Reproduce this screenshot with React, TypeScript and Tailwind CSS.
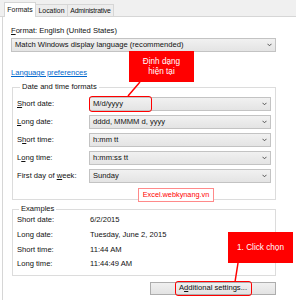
import React from "react";

function Chevron() {
  return (
    <svg width="5" height="4" viewBox="0 0 5 4" className="shrink-0">
      <path d="M0.5 0.8 L2.5 2.8 L4.5 0.8" fill="none" stroke="#444" strokeWidth="0.9" />
    </svg>
  );
}

function Combo({ value, className }: { value: string; className: string }) {
  return (
    <div
      className={
        "h-[14px] border border-[#c3c3c3] bg-gradient-to-b from-[#f1f1f1] to-[#e4e4e4] flex items-center justify-between pl-[3px] pr-[3px] " +
        className
      }
    >
      <span className="whitespace-nowrap">{value}</span>
      <Chevron />
    </div>
  );
}

function Row({ label, value }: { label: React.ReactNode; value: string }) {
  return (
    <div className="flex items-center h-[14px]">
      <div className="w-[72px] whitespace-nowrap">{label}</div>
      <Combo value={value} className="w-[182px]" />
    </div>
  );
}

function ExRow({ label, value }: { label: string; value: string }) {
  return (
    <div className="flex items-center h-[14.67px]">
      <div className="w-[73px] whitespace-nowrap">{label}</div>
      <div className="whitespace-nowrap">{value}</div>
    </div>
  );
}

export default function App() {
  return (
    <div className="w-[296px] h-[300px] bg-white relative overflow-hidden text-[7.6px] leading-[12px] text-[#111] font-['Liberation_Sans',Arial,sans-serif]">
      {/* Tabs */}
      <div className="h-[17px] bg-[#f0f0f0] border-b border-[#d6d6d6] flex items-end pl-[4px]">
        <div className="h-[15px] mb-[-1px] w-[32px] bg-white border border-b-0 border-[#d6d6d6] flex items-center justify-center text-[6.9px] pb-[1px]">
          Formats
        </div>
        <div className="h-[12px] w-[32px] bg-[#ededed] border border-b-0 border-l-0 border-[#d6d6d6] flex items-center justify-center text-[6.9px]">
          Location
        </div>
        <div className="h-[12px] w-[46px] bg-[#ededed] border border-b-0 border-l-0 border-[#d6d6d6] flex items-center justify-center text-[6.9px] tracking-[-0.2px]">
          Administrative
        </div>
      </div>

      {/* Body */}
      <div className="ml-[2px] border-l border-[#d6d6d6] pl-[8px] pt-[8px] h-[283px] flex flex-col">
        <div className="h-[12px] whitespace-nowrap">
          <span className="underline">F</span>ormat: English (United States)
        </div>
        <Combo value="Match Windows display language (recommended)" className="mt-[1px] w-[265px]" />
        <div className="mt-[15px] h-[12px] text-[#0066cc] underline whitespace-nowrap">
          Language preferences
        </div>

        <fieldset className="mt-[2px] ml-[1px] w-[264px] border border-[#dcdcdc] pl-[4px] pr-[4px] pt-[4px] pb-[16px]">
          <legend className="ml-[3px] px-[2px] leading-[12px] whitespace-nowrap">Date and time formats</legend>
          <div className="flex flex-col gap-[4px]">
            <Row label={<><span className="underline">S</span>hort date:</>} value="M/d/yyyy" />
            <Row label={<><span className="underline">L</span>ong date:</>} value="dddd, MMMM d, yyyy" />
            <Row label={<>S<span className="underline">h</span>ort time:</>} value="h:mm tt" />
            <Row label={<>L<span className="underline">o</span>ng time:</>} value="h:mm:ss tt" />
            <Row label={<>First day of <span className="underline">w</span>eek:</>} value="Sunday" />
          </div>
        </fieldset>

        <fieldset className="mt-[5px] ml-[1px] w-[264px] border border-[#dcdcdc] pl-[4px] pr-[4px] pb-[3px]">
          <legend className="ml-[2px] px-[2px] leading-[8px] whitespace-nowrap">Examples</legend>
          <ExRow label="Short date:" value="6/2/2015" />
          <ExRow label="Long date:" value="Tuesday, June 2, 2015" />
          <ExRow label="Short time:" value="11:44 AM" />
          <ExRow label="Long time:" value="11:44:49 AM" />
        </fieldset>

        <div className="w-[265px] flex justify-end mt-[6px]">
          <div className="h-[13px] w-[126px] border border-[#adadad] bg-gradient-to-b from-[#f0f0f0] to-[#e3e3e3] flex items-center justify-center whitespace-nowrap">
            A<span className="underline">d</span>ditional settings...
          </div>
        </div>
      </div>

      {/* Annotations */}
      <svg className="absolute left-0 top-0 pointer-events-none" width="296" height="300">
        <line x1="140" y1="82" x2="128" y2="96" stroke="#ff0000" strokeWidth="1.5" />
        <line x1="238" y1="263" x2="235" y2="282" stroke="#ff0000" strokeWidth="1.5" />
      </svg>

      <div className="absolute left-[129px] top-[51px] w-[65px] h-[31px] bg-[#ff0000] text-white text-[8.2px] leading-[10px] flex flex-col items-center justify-center">
        <div>Định dạng</div>
        <div>hiện tại</div>
      </div>

      <div className="absolute left-[89px] top-[96px] w-[63px] h-[16px] border-[1.5px] border-[#ff0000] rounded-[3px]" />

      <div className="absolute left-[138px] top-[188px] w-[76px] h-[14px] border border-[#ff8a8a] bg-white text-[#ff0000] text-[7.3px] flex items-center justify-center whitespace-nowrap">
        Excel.webkynang.vn
      </div>

      <div className="absolute left-[228px] top-[232px] w-[65px] h-[31px] bg-[#ff0000] text-white text-[8.2px] flex items-center justify-center whitespace-nowrap">
        1. Click chọn
      </div>

      <div className="absolute left-[175px] top-[281px] w-[77px] h-[15px] border-[1.5px] border-[#ff0000] rounded-[3px]" />
    </div>
  );
}
